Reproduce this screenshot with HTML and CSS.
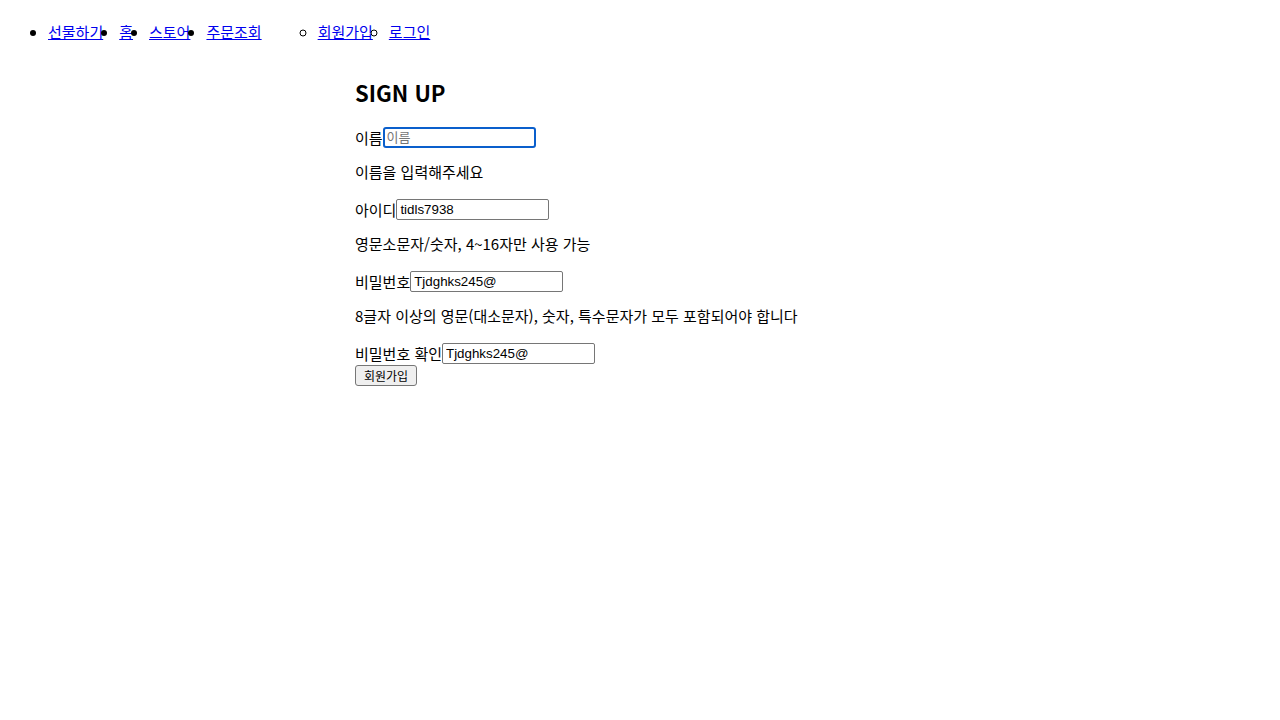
FILE: index.html
```html
<!DOCTYPE html>
<html lang="ko">
<head>
<meta charset="utf-8">
<title>SIGN UP</title>
<link rel="stylesheet" href="styles.css">
</head>
<body>
<nav class="nav">
  <ul class="menu">
    <li><a href="#">선물하기</a></li>
    <li><a href="#">홈</a></li>
    <li><a href="#">스토어</a></li>
    <li><a href="#">주문조회</a></li>
    <li class="sub-wrap">
      <ul class="submenu">
        <li><a href="#">회원가입</a></li>
        <li><a href="#">로그인</a></li>
      </ul>
    </li>
  </ul>
</nav>
<main class="main">
  <h2 class="title">SIGN UP</h2>
  <form class="form">
    <div class="row"><label for="name">이름</label><input id="name" class="field focused" type="text" placeholder="이름"></div>
    <p class="hint">이름을 입력해주세요</p>
    <div class="row"><label for="uid">아이디</label><input id="uid" class="field" type="text" value="tidls7938"></div>
    <p class="hint">영문소문자/숫자, 4~16자만 사용 가능</p>
    <div class="row"><label for="pw">비밀번호</label><input id="pw" class="field" type="text" value="Tjdghks245@"></div>
    <p class="hint">8글자 이상의 영문(대소문자), 숫자, 특수문자가 모두 포함되어야 합니다</p>
    <div class="row"><label for="pw2">비밀번호 확인</label><input id="pw2" class="field" type="text" value="Tjdghks245@"></div>
    <button class="btn" type="button">회원가입</button>
  </form>
</main>
</body>
</html>
```

FILE: styles.css
```css
body {
  margin: 8px;
  font-family: "Noto Sans CJK KR", "Noto Sans", sans-serif;
  font-size: 15px;
  color: #000;
  background: #fff;
}
a { color: #0000ee; text-decoration: underline; }
.menu {
  display: flex;
  gap: 16px;
  margin: 16px 0 0;
  padding-left: 40px;
  line-height: 16px;
  list-style: disc;
}
.sub-wrap { list-style: none; }
.submenu {
  display: flex;
  gap: 16px;
  margin: 0;
  padding-left: 40px;
  list-style: circle;
}
.main {
  width: 570px;
  margin: 0 auto;
}
.title {
  margin: 38px 0 20px;
  font-size: 22px;
  line-height: 28px;
  font-weight: 700;
}
.form { display: flex; flex-direction: column; align-items: flex-start; }
.row {
  display: flex;
  align-items: center;
  height: 22px;
}
.hint {
  margin: 14px 0 16px;
  line-height: 20px;
}
.field {
  box-sizing: border-box;
  width: 153px;
  height: 21px;
  margin: 0;
  padding: 1px 3px;
  border: 1px solid #767676;
  border-radius: 2px;
  font-family: "Liberation Sans", "Noto Sans CJK KR", sans-serif;
  font-size: 13.33px;
  color: #000;
  background: #fff;
}
.field::placeholder { color: #757575; font-family: "Noto Sans CJK KR", sans-serif; font-size: 13px; }
.focused {
  border: 2px solid #0a5fcc;
  border-radius: 3px;
  padding: 0 2px;
}
.btn {
  box-sizing: border-box;
  height: 21px;
  width: 62px;
  margin: 1px 0 0;
  padding: 0 6px;
  border: 1px solid #767676;
  border-radius: 3px;
  background: #efefef;
  font-family: "Noto Sans CJK KR", sans-serif;
  font-size: 12px;
  line-height: 17px;
  color: #000;
}
```
